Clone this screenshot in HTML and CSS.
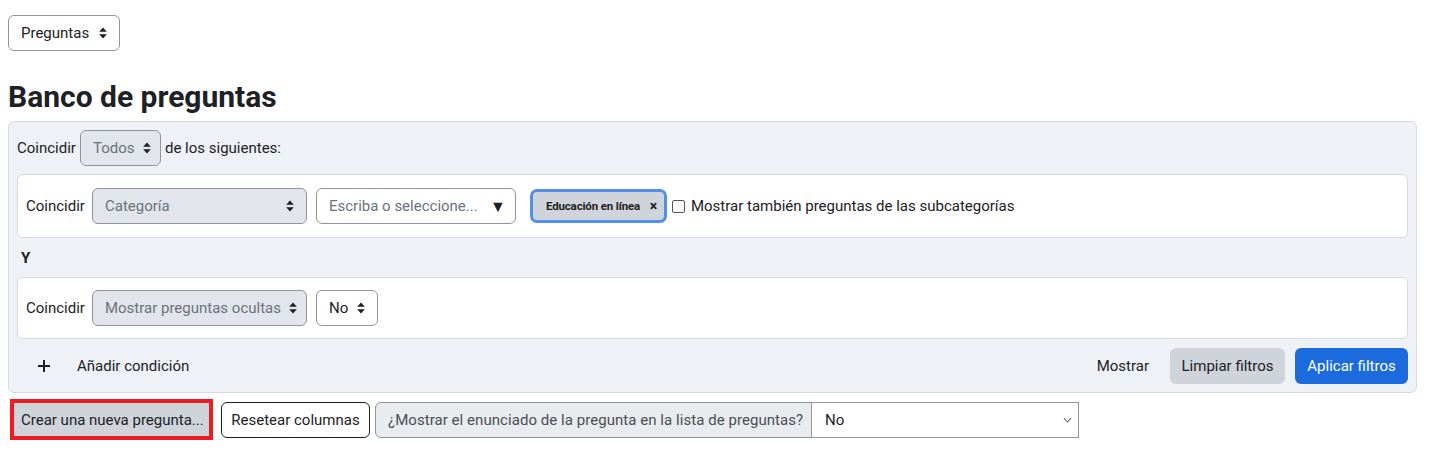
FILE: index.html
```html
<!DOCTYPE html>
<html lang="es">
<head>
<meta charset="utf-8">
<title>Banco de preguntas</title>
<link rel="stylesheet" href="styles.css">
</head>
<body>
<div class="page">
  <div class="top-select sel">
    <span>Preguntas</span>
    <svg class="ud" viewBox="0 0 8 12" width="8" height="12"><path d="M4 0.5 L7.8 4.8 H0.2 Z M4 11.5 L7.8 7.2 H0.2 Z" fill="#1d2125"/></svg>
  </div>

  <h2 class="title">Banco de preguntas</h2>

  <div class="panel">
    <div class="match-row">
      <span>Coincidir</span>
      <div class="sel sel-dis todos">
        <span>Todos</span>
        <svg class="ud" viewBox="0 0 8 12" width="8" height="12"><path d="M4 0.5 L7.8 4.8 H0.2 Z M4 11.5 L7.8 7.2 H0.2 Z" fill="#1d2125"/></svg>
      </div>
      <span>de los siguientes:</span>
    </div>

    <div class="card card1">
      <span class="lbl">Coincidir</span>
      <div class="sel sel-dis wide">
        <span>Categoría</span>
        <svg class="ud" viewBox="0 0 8 12" width="8" height="12"><path d="M4 0.5 L7.8 4.8 H0.2 Z M4 11.5 L7.8 7.2 H0.2 Z" fill="#1d2125"/></svg>
      </div>
      <div class="textin">
        <span>Escriba o seleccione...</span>
        <span class="tri">&#9660;</span>
      </div>
      <div class="badge"><span>Educación en línea</span><span class="x">×</span></div>
      <label class="check"><span class="box"></span>Mostrar también preguntas de las subcategorías</label>
    </div>

    <div class="and">Y</div>

    <div class="card card2">
      <span class="lbl">Coincidir</span>
      <div class="sel sel-dis wide">
        <span>Mostrar preguntas ocultas</span>
        <svg class="ud" viewBox="0 0 8 12" width="8" height="12"><path d="M4 0.5 L7.8 4.8 H0.2 Z M4 11.5 L7.8 7.2 H0.2 Z" fill="#1d2125"/></svg>
      </div>
      <div class="sel no">
        <span>No</span>
        <svg class="ud" viewBox="0 0 8 12" width="8" height="12"><path d="M4 0.5 L7.8 4.8 H0.2 Z M4 11.5 L7.8 7.2 H0.2 Z" fill="#1d2125"/></svg>
      </div>
    </div>

    <div class="actions">
      <div class="add">
        <svg class="plus" viewBox="0 0 14 14" width="14" height="14"><path d="M7 1 V13 M1 7 H13" stroke="#1d2125" stroke-width="2"/></svg>
        <span>Añadir condición</span>
      </div>
      <div class="right">
        <span class="btn btn-link">Mostrar</span>
        <span class="btn btn-grey limpiar">Limpiar filtros</span>
        <span class="btn btn-blue">Aplicar filtros</span>
      </div>
    </div>
  </div>

  <div class="bottom">
    <div class="hl"><span class="btn btn-grey create">Crear una nueva pregunta...</span></div>
    <span class="btn btn-outline">Resetear columnas</span>
    <div class="igroup">
      <span class="ilabel">¿Mostrar el enunciado de la pregunta en la lista de preguntas?</span>
      <div class="isel">
        <span>No</span>
        <svg viewBox="0 0 10 6" width="9" height="6"><path d="M1 1 L5 5 L9 1" stroke="#6a737b" stroke-width="1.3" fill="none"/></svg>
      </div>
    </div>
  </div>
</div>
</body>
</html>
```

FILE: styles.css
```css
* { box-sizing: border-box; }
html, body { margin: 0; padding: 0; background: #fff; }
body {
  font-family: Roboto, "Liberation Sans", sans-serif;
  font-size: 15px;
  color: #1d2125;
}
.page { padding: 15px 13px 0 8px; }

.sel {
  display: inline-flex;
  align-items: center;
  justify-content: space-between;
  height: 36px;
  border: 1px solid #8f959e;
  border-radius: 6px;
  background: #fff;
  padding: 0 12px 0 12px;
  color: #1d2125;
  white-space: nowrap;
}
.sel .ud { flex: none; margin-left: 8px; }
.top-select { width: 112px; }

.title {
  font-size: 30px;
  font-weight: 700;
  line-height: 36px;
  margin: 28px 0 6px 0;
}

.panel {
  background: #eef1f6;
  border: 1px solid #d6dae2;
  border-radius: 6px;
  padding: 8px 8px 8px 8px;
}
.match-row {
  display: flex;
  align-items: center;
  gap: 4px;
  height: 36px;
}
.sel-dis { background: #e2e5ec; color: #6a737b; }
.todos { width: 81px; height: 36px; }

.card {
  display: flex;
  align-items: center;
  gap: 9px;
  background: #fff;
  border: 1px solid #d6dae2;
  border-radius: 6px;
  padding: 0 8px;
}
.card .lbl { margin-right: -2px; }
.card1 { margin-top: 8px; height: 64px; }
.card2 { height: 62px; }
.wide { width: 215px; }
.no { width: 62px; }

.textin {
  display: flex;
  align-items: center;
  justify-content: space-between;
  width: 200px;
  height: 36px;
  border: 1px solid #8f959e;
  border-radius: 6px;
  padding: 0 9px 0 12px;
  color: #6a737b;
  white-space: nowrap;
}
.tri { color: #1d2125; font-size: 16px; }

.badge {
  display: inline-flex;
  align-items: center;
  justify-content: space-between;
  margin-left: 5px;
  width: 137px;
  height: 34px;
  padding: 0 7px 0 13px;
  border: 3px solid #5290e8;
  border-radius: 7px;
  background: #ced4da;
  font-size: 11.5px;
  font-weight: 700;
  letter-spacing: -0.15px;
  white-space: nowrap;
}
.badge .x { font-size: 14px; }

.check { display: inline-flex; align-items: center; margin-left: -4px; white-space: nowrap; }
.box {
  width: 13px; height: 13px;
  border: 1px solid #555;
  border-radius: 2px;
  margin-right: 6px;
  background: #fff;
}

.and {
  font-weight: 700;
  padding-left: 4px;
  height: 39px;
  line-height: 40px;
}

.actions {
  display: flex;
  justify-content: space-between;
  align-items: center;
  margin-top: 8px;
  height: 37px;
}
.add { display: flex; align-items: center; padding-left: 20px; }
.add .plus { margin-right: 26px; }
.right { display: flex; gap: 10px; align-items: center; }

.btn {
  display: inline-flex;
  align-items: center;
  justify-content: center;
  height: 36px;
  padding: 0 12px;
  border-radius: 6px;
  border: 1px solid transparent;
  white-space: nowrap;
}
.btn-link { padding: 0 10px 0 13px; }
.btn-grey { background: #ced4da; }
.limpiar { width: 115px; }
.btn-blue { background: #1b6ade; color: #fff; width: 113px; }
.btn-outline { border-color: #1d2125; background: #fff; width: 149px; padding: 0; }

.bottom {
  display: flex;
  align-items: center;
  gap: 5px;
  margin-top: 6px;
}
.hl {
  border: 4px solid #ec1c24;
  margin-left: 2px;
  margin-right: 3px;
}
.create { border-radius: 0; height: 33px; width: 195px; padding: 0 3px 0 6px; justify-content: flex-start; }

.igroup {
  display: flex;
  height: 36px;
}
.ilabel {
  display: flex;
  align-items: center;
  background: #e9ecef;
  border: 1px solid #8f959e;
  border-radius: 6px 0 0 6px;
  padding: 0 12px;
  color: #4a4f55;
  width: 437px;
  white-space: nowrap;
  font-size: 15px;
  letter-spacing: 0.05px;
}
.isel {
  display: flex;
  align-items: center;
  justify-content: space-between;
  width: 267px;
  border: 1px solid #8f959e;
  border-left: none;
  padding: 0 6px 0 13px;
}
```
